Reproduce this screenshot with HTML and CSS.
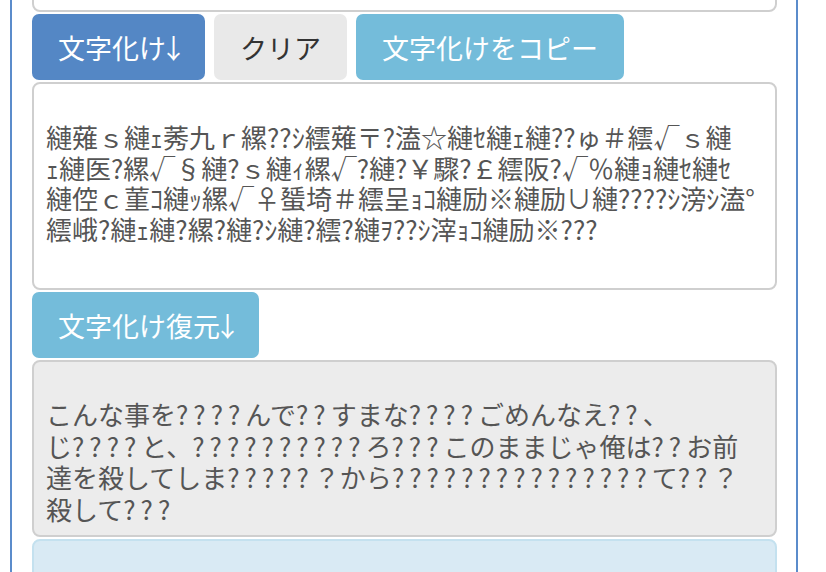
FILE: index.html
```html
<!DOCTYPE html>
<html lang="ja">
<head>
  <meta charset="UTF-8" />
  <title>文字化け</title>
  <link rel="stylesheet" href="styles.css">
</head>
<body>

  <div class="panel">
    <!-- input (scrolled off the top) -->
    <div class="field field-top"></div>

    <div class="btn-row">
      <button class="btn btn-primary">文字化け<span class="arrow">↓</span></button>
      <button class="btn btn-default">クリア</button>
      <button class="btn btn-info">文字化けをコピー</button>
    </div>

    <!-- garbled output -->
    <div class="field garbled">
      縺薙ｓ縺ｪ莠九ｒ縲??ｼ繧薙〒?溘☆縺ｾ縺ｪ縺??ゅ＃繧√ｓ縺<br>
      ｪ縺医?縲√§縺?ｓ縺ｨ縲√?縺?￥驟?￡繧阪?√％縺ｮ縺ｾ縺ｾ<br>
      縺倥ｃ菫ｺ縺ｯ縲√♀蜑埼＃繧呈ｮｺ縺励※縺励∪縺????ｼ滂ｼ溘°<br>
      繧峨?縺ｪ縺?縲?縺?ｼ縺?繧?縺ｦ??ｼ滓ｮｺ縺励※???
    </div>

    <div class="btn-row">
      <button class="btn btn-info">文字化け復元<span class="arrow">↓</span></button>
    </div>

    <!-- restored text -->
    <div class="field restored">
      こんな事を<span class="q">????</span>んで<span class="q">??</span>すまな<span class="q">????</span>ごめんなえ<span class="q">??</span>、<br>
      じ<span class="q">????</span>と、<span class="q">??????????</span>ろ<span class="q">???</span>このままじゃ俺は<span class="q">??</span>お前<br>
      達を殺してしま<span class="q">?????</span>？から<span class="q">???????????????</span>て<span class="q">??</span>？<br>
      殺して<span class="q">???</span>
    </div>

    <div class="field alert"></div>
  </div>

</body>
</html>
```

FILE: styles.css
```css
body {
  margin: 0;
  padding: 0;
  background: #fff;
  font-family: "Noto Sans CJK JP", "Noto Sans", sans-serif;
  color: #555;
  overflow: hidden;
}

.panel {
  margin: -62px 28px 0 10px;
  padding: 0 19px 0 20px;
  border-left: 2px solid #5b8ccb;
  border-right: 2px solid #5b8ccb;
  display: flex;
  flex-direction: column;
  gap: 2px;
  min-height: 700px;
}

.field {
  border: 2px solid #cfcfcf;
  border-radius: 8px;
  background: #fff;
  font-size: 26px;
  box-sizing: border-box;
}

.field-top {
  height: 74px;
}

.garbled {
  height: 208px;
  padding: 38px 12px 0;
  line-height: 30.5px;
}

.restored {
  background: #ececec;
  height: 177px;
  padding: 36px 12px 0;
  line-height: 31.5px;
}

/* the lost characters come out wider in the restored text */
.restored .q {
  letter-spacing: 5px;
}

.alert {
  background: #d9eaf4;
  border-color: #c4e1ef;
  height: 80px;
}

.btn-row {
  display: flex;
  gap: 9px;
}

.btn {
  height: 66px;
  padding: 0 26px;
  border: none;
  border-radius: 7px;
  font-family: "Noto Sans CJK JP", "Noto Sans", sans-serif;
  font-size: 27px;
  white-space: nowrap;
  color: #fff;
  cursor: pointer;
}

.arrow {
  display: inline-block;
  width: 13px;
  text-indent: -6px;
}

.btn-primary {
  background: #5487c5;
}

.btn-default {
  background: #e9e9e9;
  color: #333;
}

.btn-info {
  background: #74bcda;
}
```
